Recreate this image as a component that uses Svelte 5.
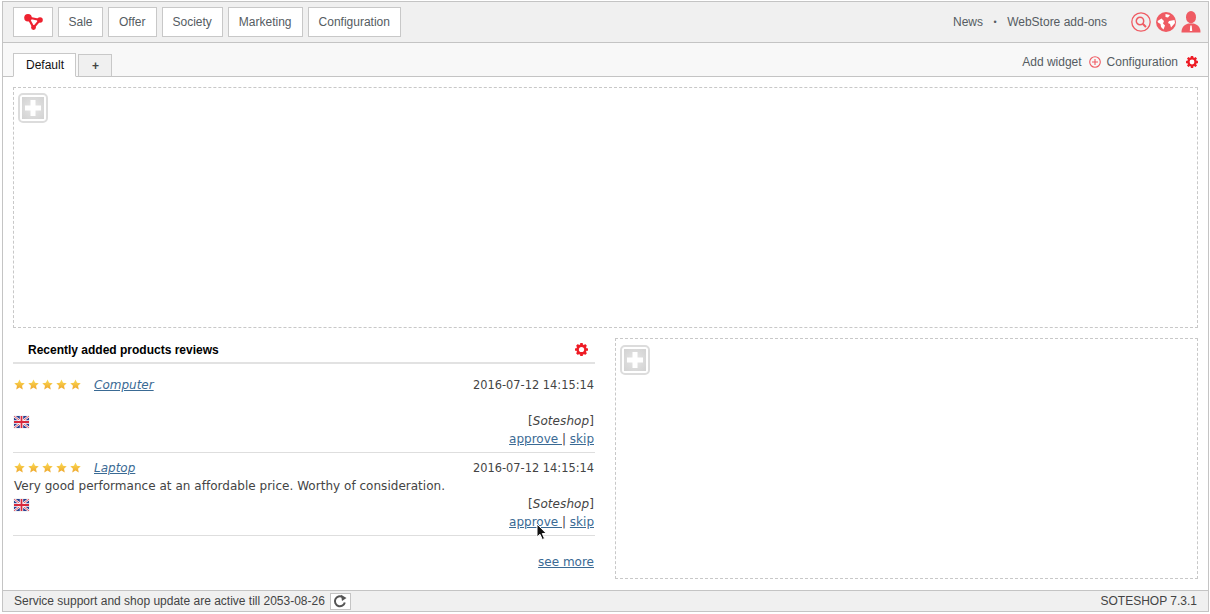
<script>
  const menu = ['Sale', 'Offer', 'Society', 'Marketing', 'Configuration'];
  const reviews = [
    { name: 'Computer', date: '2016-07-12 14:15:14', text: '' },
    { name: 'Laptop', date: '2016-07-12 14:15:14', text: 'Very good performance at an affordable price. Worthy of consideration.' }
  ];
  const stars = [0, 1, 2, 3, 4];
</script>

{#snippet gear(size)}
  <svg class="gear" width={size} height={size} viewBox="0 0 24 24" aria-hidden="true">
    <g fill="#ee1c25">
      <rect x="9.5" y="0" width="5" height="24" rx="1"/>
      <rect x="9.5" y="0" width="5" height="24" rx="1" transform="rotate(45 12 12)"/>
      <rect x="9.5" y="0" width="5" height="24" rx="1" transform="rotate(90 12 12)"/>
      <rect x="9.5" y="0" width="5" height="24" rx="1" transform="rotate(135 12 12)"/>
    </g>
    <circle cx="12" cy="12" r="7.500" fill="none" stroke="#ee1c25" stroke-width="4"/>
    <circle cx="12" cy="12" r="4.800" fill="#fff"/>
  </svg>
{/snippet}

{#snippet addBox()}
  <div class="add-box">
    <div class="add-inner">
      <svg width="16" height="16" viewBox="0 0 16 16" aria-hidden="true"><path d="M5.500 0h5v5.500H16v5h-5.500V16h-5v-5.500H0v-5h5.500z" fill="#fff"/></svg>
    </div>
  </div>
{/snippet}

<svg class="defs" width="0" height="0" aria-hidden="true">
  <defs>
    <linearGradient id="star" x1="0" y1="0" x2="0" y2="1">
      <stop offset="0" stop-color="#fbdc55"/>
      <stop offset="1" stop-color="#eea62c"/>
    </linearGradient>
  </defs>
</svg>

<div class="frame">
  <header class="top">
    <nav class="menu">
      <button class="btn logo" aria-label="Home">
        <svg width="19" height="16" viewBox="0 0 19 16" aria-hidden="true">
          <path d="M4 3.500L16 6L9.500 13.500Z" fill="none" stroke="#ee2230" stroke-width="2.200"/>
          <circle cx="4" cy="3.800" r="3.800" fill="#ee2230"/>
          <circle cx="16" cy="6" r="2.800" fill="#ee2230"/>
          <circle cx="9.500" cy="13.500" r="2.400" fill="#ee2230"/>
        </svg>
      </button>
      {#each menu as m}
        <button class="btn">{m}</button>
      {/each}
    </nav>
    <div class="top-right">
      <span class="tl">News</span>
      <span class="dot">•</span>
      <span class="tl">WebStore add-ons</span>
      <div class="icons">
        <svg width="20" height="20" viewBox="0 0 20 20" aria-hidden="true">
          <circle cx="10" cy="10" r="9.200" fill="none" stroke="#ef5b63" stroke-width="1.300"/>
          <circle cx="9" cy="9" r="3.700" fill="none" stroke="#ef5b63" stroke-width="1.500"/>
          <path d="M11.700 11.700L15 15" stroke="#ef5b63" stroke-width="2"/>
        </svg>
        <svg width="20" height="20" viewBox="0 0 20 20" aria-hidden="true">
          <circle cx="10" cy="10" r="10" fill="#ef5b63"/>
          <path d="M1.500 9L5.500 6.500L8 9L7 11.500L9 13.500L7.500 17.500L5 15L4.500 12L2 10.500Z M9.500 2L14 3L12 5.500L9.500 5Z M13 9L18.500 8L19 11L15 15.500L14 12L12 11Z" fill="#fff"/>
        </svg>
        <svg width="20" height="22" viewBox="0 0 20 22" aria-hidden="true">
          <ellipse cx="10" cy="6.200" rx="5" ry="6.200" fill="#ef5b63"/>
          <path d="M0.500 21.500C0.500 16 3 14 7.500 12.500H12.500C17 14 19.500 16 19.500 21.500Z" fill="#ef5b63"/>
          <path d="M9.300 14.500h1.400l.5 5.500h-2.400z" fill="#fff"/>
        </svg>
      </div>
    </div>
  </header>

  <div class="tabbar">
    <div class="tabs">
      <div class="tab active">Default</div>
      <div class="tab plus">+</div>
    </div>
    <div class="tools">
      <span class="tl">Add widget</span>
      <svg class="plus-icon" width="12" height="12" viewBox="0 0 12 12" aria-hidden="true">
        <circle cx="6" cy="6" r="5.300" fill="none" stroke="#ef5b63" stroke-width="1.100"/>
        <path d="M6 3v6M3 6h6" stroke="#ef5b63" stroke-width="1.100"/>
      </svg>
      <span class="tl">Configuration</span>
      <span class="tool-gear">{@render gear(12)}</span>
    </div>
  </div>

  <main class="content">
    <section class="zone zone-top">{@render addBox()}</section>
    <div class="cols">
      <section class="widget">
        <div class="w-head">
          <h2>Recently added products reviews</h2>
          {@render gear(13)}
        </div>
        {#each reviews as r}
          <article class="review">
            <div class="row">
              <div class="rating">
                <span class="stars">
                  {#each stars as s}
                    <svg width="11" height="11" viewBox="0 0 24 24" aria-hidden="true">
                      <path d="M12 1l3.400 7.400 8 .9-5.900 5.400 1.600 8L12 18.700l-7.100 4 1.600-8L.6 9.300l8-.9z" fill="url(#star)"/>
                    </svg>
                  {/each}
                </span>
                <a href="#r" class="name">{r.name}</a>
              </div>
              <span class="date">{r.date}</span>
            </div>
            <p class="text">{r.text}</p>
            <div class="row flag-row">
              <svg class="flag" width="15" height="12" viewBox="0 0 15 12" aria-hidden="true">
                <rect width="15" height="12" fill="#2a3f8f"/>
                <path d="M0 0L15 12M15 0L0 12" stroke="#fff" stroke-width="2.200"/>
                <path d="M0 0L15 12M15 0L0 12" stroke="#d8283c" stroke-width=".8"/>
                <path d="M7.500 0V12M0 6H15" stroke="#fff" stroke-width="3.400"/>
                <path d="M7.500 0V12M0 6H15" stroke="#d8283c" stroke-width="1.800"/>
              </svg>
              <span class="author">[<em>Soteshop</em>]</span>
            </div>
            <div class="actions"><a href="#a">approve&nbsp;</a>| <a href="#s">skip</a></div>
          </article>
        {/each}
        <div class="more"><a href="#m">see more</a></div>
      </section>
      <section class="zone zone-side">{@render addBox()}</section>
    </div>
  </main>

  <footer class="foot">
    <div class="foot-left">
      <span>Service support and shop update are active till 2053-08-26</span>
      <button class="refresh" aria-label="Refresh">
        <svg width="14" height="14" viewBox="0 0 14 14" aria-hidden="true">
          <path d="M11.800 8.500A5 5 0 1 1 9.500 3" fill="none" stroke="#555" stroke-width="2"/>
          <path d="M8 0.800L13.500 4L9 7Z" fill="#555"/>
        </svg>
      </button>
    </div>
    <span class="version">SOTESHOP 7.3.1</span>
  </footer>

  <svg class="cursor" width="12" height="18" viewBox="0 0 12 18" aria-hidden="true">
    <path d="M1 1V14L4 11.300L6.300 16.500L8.500 15.500L6.300 10.500H10.300Z" fill="#111" stroke="#fff" stroke-width="1"/>
  </svg>
</div>

<style>
  :global(body) {
    margin: 0;
    background: #fff;
  }
  .defs {
    position: absolute;
  }
  .frame {
    position: relative;
    box-sizing: border-box;
    width: 1207px;
    height: 611px;
    margin: 1px 0 0 2px;
    border: 1px solid #c4c4c4;
    display: flex;
    flex-direction: column;
    font-family: "Liberation Sans", Arial, sans-serif;
    font-size: 12px;
    color: #555c62;
  }
  .top {
    flex: 0 0 41px;
    box-sizing: border-box;
    display: flex;
    justify-content: space-between;
    align-items: center;
    background: #f0f0f0;
    border-bottom: 1px solid #c4c4c4;
    padding: 0 7px 0 10px;
  }
  .menu {
    display: flex;
    gap: 5px;
  }
  .btn {
    box-sizing: border-box;
    height: 30px;
    padding: 0 10px;
    background: #fff;
    border: 1px solid #c8c8c8;
    font: inherit;
    color: inherit;
    display: flex;
    align-items: center;
  }
  .btn:nth-child(2) {
    padding: 0 9.500px;
  }
  .logo {
    width: 40px;
    justify-content: center;
    padding: 0;
  }
  .top-right {
    display: flex;
    align-items: center;
  }
  .dot {
    margin: 0 10.500px;
    font-size: 9px;
  }
  .icons {
    display: flex;
    align-items: center;
    gap: 5px;
    margin-left: 24px;
  }
  .tabbar {
    flex: 0 0 34px;
    box-sizing: border-box;
    display: flex;
    justify-content: space-between;
    background: #f8f8f8;
    border-bottom: 1px solid #c4c4c4;
    padding: 0 10px 0 10px;
  }
  .tabs {
    display: flex;
    align-items: flex-end;
    gap: 2px;
    margin-bottom: -1px;
  }
  .tab {
    box-sizing: border-box;
    height: 23px;
    padding: 0 11px 0 12px;
    border: 1px solid #c8c8c8;
    display: flex;
    align-items: center;
  }
  .tab.active {
    height: 24px;
    background: #fff;
    border-bottom-color: #fff;
    color: #111;
  }
  .tab.plus {
    padding: 0 12px 0 13px;
    background: #f0f0f0;
    font-weight: bold;
    color: #444;
    border-bottom-color: #c4c4c4;
  }
  .tools {
    box-sizing: border-box;
    display: flex;
    align-items: center;
    height: 33px;
    padding-top: 5px;
  }
  .plus-icon {
    margin: 0 6px 0 7px;
  }
  .tool-gear {
    display: flex;
    margin-left: 8px;
  }
  .content {
    flex: 1;
    box-sizing: border-box;
    padding: 10px 10px 11px 10px;
    display: flex;
    flex-direction: column;
    gap: 10px;
    min-height: 0;
  }
  .zone {
    box-sizing: border-box;
    border: 1px dashed #c8c8c8;
    padding: 5px 4px;
  }
  .zone-top {
    flex: 0 0 241px;
  }
  .cols {
    flex: 1;
    display: flex;
    gap: 20px;
    min-height: 0;
  }
  .zone-side {
    flex: 1;
    padding-top: 6px;
  }
  .add-box {
    box-sizing: border-box;
    width: 30px;
    height: 30px;
    border: 2px solid #dcdcdc;
    border-radius: 5px;
    padding: 2px;
    background: #fff;
  }
  .add-inner {
    width: 22px;
    height: 22px;
    background: radial-gradient(circle, #e6e6e6, #d2d2d2);
    display: flex;
    align-items: center;
    justify-content: center;
  }
  .widget {
    flex: 0 0 582px;
    font-family: "DejaVu Sans", Verdana, sans-serif;
    color: #444;
  }
  .w-head {
    height: 26px;
    box-sizing: border-box;
    border-bottom: 2px solid #e2e2e2;
    display: flex;
    justify-content: space-between;
    align-items: center;
    padding: 0 7px 1px 15px;
    margin-bottom: 6px;
  }
  .w-head h2 {
    margin: 0;
    font: bold 12px "Liberation Sans", Arial, sans-serif;
    color: #000;
  }
  .review {
    box-sizing: border-box;
    height: 83px;
    border-bottom: 1px solid #dedede;
    padding-top: 6px;
  }
  .row {
    display: flex;
    justify-content: space-between;
    align-items: center;
    height: 16px;
    padding-right: 1px;
  }
  .rating {
    display: flex;
    align-items: center;
    padding-left: 1px;
  }
  .stars {
    display: flex;
    gap: 3px;
    margin-right: 13px;
  }
  .stars svg {
    display: block;
  }
  .name {
    font-style: italic;
    margin-top: 2px;
  }
  a {
    color: #3a6a94;
    text-decoration: underline;
  }
  .date {
    font-size: 11.400px;
    margin-top: 2px;
  }
  .text {
    margin: 0;
    height: 21px;
    line-height: 23px;
    font-size: 12px;
    letter-spacing: 0.025px;
    white-space: nowrap;
    padding-left: 1px;
  }
  .flag-row {
    font-size: 12px;
  }
  .flag {
    margin: 1px 0 0 1px;
    box-shadow: 0 0 1px #bbb;
  }
  .author {
    letter-spacing: 0.080px;
  }
  .actions {
    margin-top: 2px;
    padding-right: 1px;
    text-align: right;
    font-size: 12px;
    line-height: 16px;
  }
  .more {
    text-align: right;
    margin-top: 19px;
    padding-right: 1px;
    font-size: 12px;
  }
  .foot {
    flex: 0 0 21px;
    box-sizing: border-box;
    display: flex;
    justify-content: space-between;
    align-items: center;
    background: #f0f0f0;
    border-top: 1px solid #c4c4c4;
    padding: 0 11px 0 11px;
    color: #444;
  }
  .foot-left {
    display: flex;
    align-items: center;
    gap: 5px;
  }
  .refresh {
    box-sizing: border-box;
    width: 21px;
    height: 17px;
    padding: 0;
    background: #fff;
    border: 1px solid #c4c4c4;
    display: flex;
    align-items: center;
    justify-content: center;
  }
  .cursor {
    position: absolute;
    left: 533px;
    top: 521px;
  }
</style>
